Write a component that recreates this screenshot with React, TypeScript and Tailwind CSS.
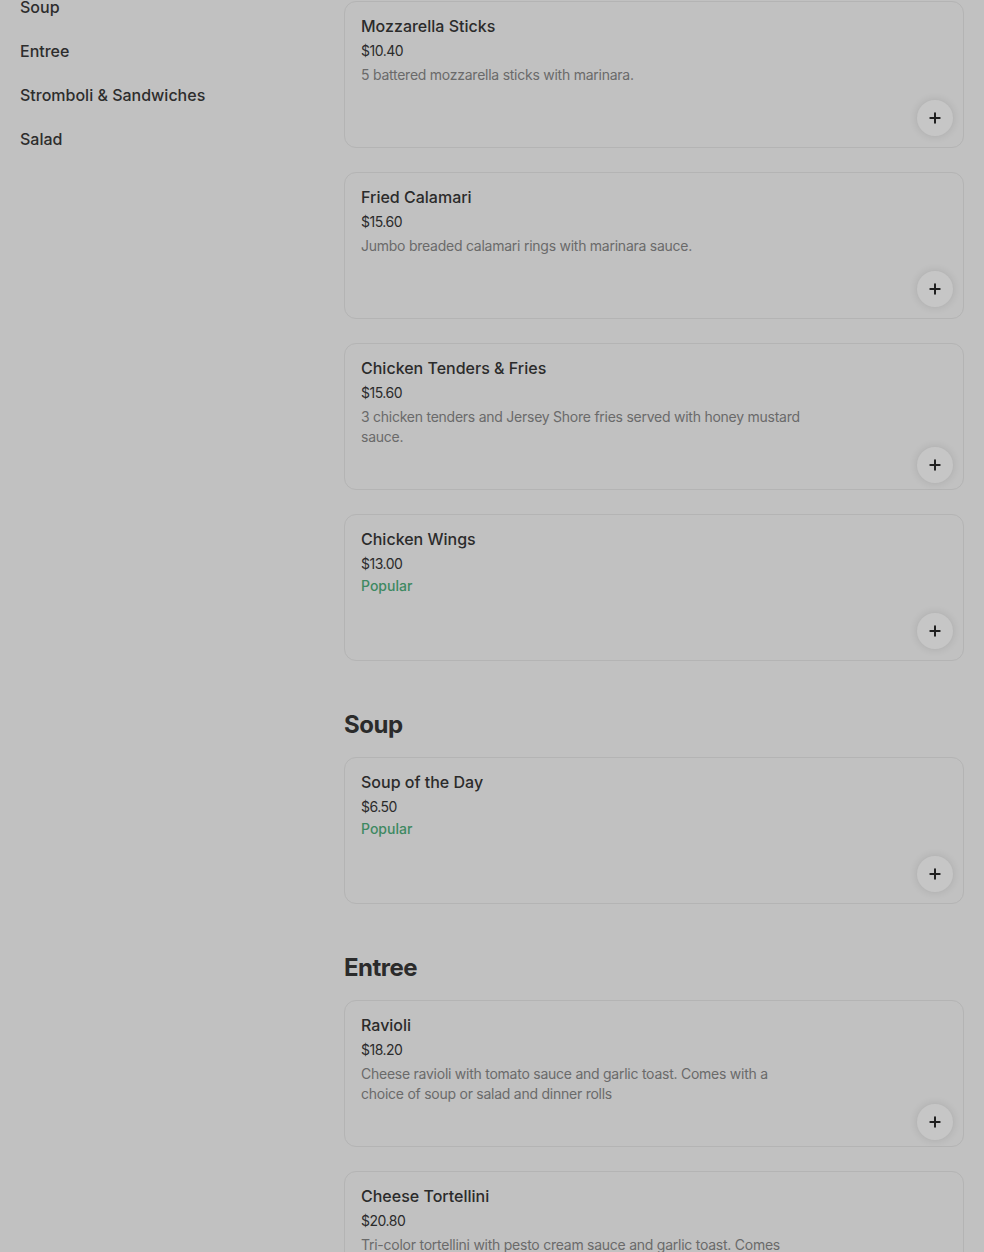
import { Plus } from "lucide-react";

type Item = {
  name: string;
  price: string;
  desc?: string;
  popular?: boolean;
};

const sections: { title?: string; items: Item[] }[] = [
  {
    items: [
      { name: "Mozzarella Sticks", price: "$10.40", desc: "5 battered mozzarella sticks with marinara." },
      { name: "Fried Calamari", price: "$15.60", desc: "Jumbo breaded calamari rings with marinara sauce." },
      {
        name: "Chicken Tenders & Fries",
        price: "$15.60",
        desc: "3 chicken tenders and Jersey Shore fries served with honey mustard sauce.",
      },
      { name: "Chicken Wings", price: "$13.00", popular: true },
    ],
  },
  {
    title: "Soup",
    items: [{ name: "Soup of the Day", price: "$6.50", popular: true }],
  },
  {
    title: "Entree",
    items: [
      {
        name: "Ravioli",
        price: "$18.20",
        desc: "Cheese ravioli with tomato sauce and garlic toast. Comes with a choice of soup or salad and dinner rolls",
      },
      {
        name: "Cheese Tortellini",
        price: "$20.80",
        desc: "Tri-color tortellini with pesto cream sauce and garlic toast. Comes with a choice of soup or salad and dinner rolls",
      },
    ],
  },
];

const nav = ["Soup", "Entree", "Stromboli & Sandwiches", "Salad"];

function Card({ item }: { item: Item }) {
  return (
    <div className="h-[147px] rounded-xl border border-[#b4b4b4] bg-[#c1c1c1] pl-4 pr-[10px] pt-[14px] pb-[11px] flex flex-col">
      <div className="text-base leading-5 font-medium text-[#2b2b2b]">{item.name}</div>
      <div className="mt-[5px] text-sm leading-5 tracking-[-0.5px] text-[#2b2b2b]">{item.price}</div>
      {item.desc && (
        <div className="mt-1 max-w-[445px] text-sm leading-5 tracking-[-0.25px] text-[#6a6a6a]">
          {item.desc}
        </div>
      )}
      {item.popular && (
        <div className="mt-0.5 text-sm leading-5 font-medium text-[#3e8962]">Popular</div>
      )}
      <div className="mt-auto flex justify-end">
        <button className="w-9 h-9 rounded-full bg-[#c6c6c6] shadow-[0_0_8px_rgba(0,0,0,0.12)] flex items-center justify-center text-[#1f1f1f]">
          <Plus size={16} strokeWidth={3} />
        </button>
      </div>
    </div>
  );
}

export default function App() {
  return (
    <div
      className="h-[1252px] overflow-hidden bg-[#c1c1c1]"
      style={{ fontFamily: "Inter, 'Noto Sans', sans-serif" }}
    >
      <div className="flex">
        <aside className="w-[344px] shrink-0 px-5 -mt-[15px]">
          {nav.map((n) => (
            <div key={n} className="h-11 flex items-center text-base font-medium text-[#2d2d2d]">
              {n}
            </div>
          ))}
        </aside>
        <main className="w-[620px] pt-px">
          {sections.map((s, i) => (
            <section key={i} className={s.title ? "pt-12" : ""}>
              {s.title && (
                <h2 className="mb-4 text-2xl leading-8 font-bold tracking-[-0.5px] text-[#2b2b2b]">
                  {s.title}
                </h2>
              )}
              <div className="flex flex-col gap-6">
                {s.items.map((it) => (
                  <Card key={it.name} item={it} />
                ))}
              </div>
            </section>
          ))}
        </main>
      </div>
    </div>
  );
}
